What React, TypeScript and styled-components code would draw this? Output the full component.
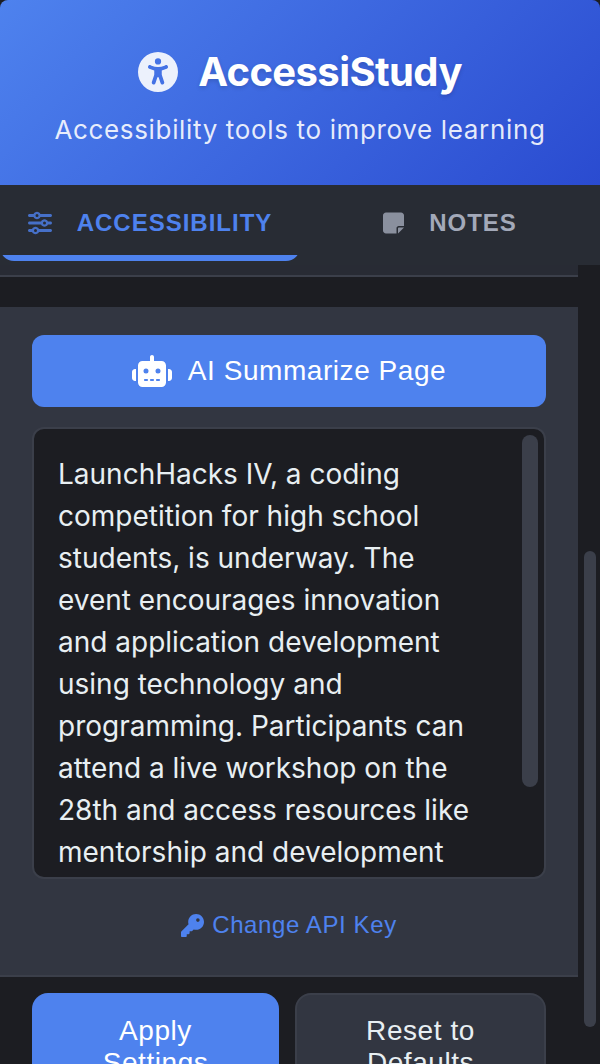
import React, { useState } from 'react';
import styled, { createGlobalStyle } from 'styled-components';
import { FaKey, FaNoteSticky, FaRobot, FaSliders, FaUniversalAccess } from 'react-icons/fa6';

const GlobalStyle = createGlobalStyle`
  *, *::before, *::after { box-sizing: border-box; }
  body {
    margin: 0;
    background: #1c1d22;
    color: #e8eff2;
    font-family: Inter, sans-serif;
    overflow: hidden;
  }
  button { font-family: "Liberation Sans", Arial, sans-serif; }
`;

const Popup = styled.div`
  display: flex;
  flex-direction: column;
  height: 100vh;
  overflow: hidden;
`;

const Header = styled.header`
  flex: none;
  display: flex;
  flex-direction: column;
  align-items: center;
  gap: 16px;
  padding: 48px 32px 38px;
  border-radius: 8px 8px 0 0;
  background: linear-gradient(135deg, #4e82ee 0%, #2a4bd0 100%);
`;

const Brand = styled.h1`
  display: flex;
  align-items: center;
  gap: 20px;
  margin: 0;
  font-size: 40px;
  line-height: 48px;
  font-weight: 700;
  letter-spacing: -0.015em;
  color: #fff;
  text-shadow: 0 2px 4px rgba(0, 0, 0, 0.15);

  svg { opacity: 0.9; }
`;

const Tagline = styled.p`
  margin: 0;
  font-size: 26px;
  line-height: 35px;
  letter-spacing: 0.025em;
  color: rgba(255, 255, 255, 0.88);
`;

const TabBar = styled.nav`
  flex: none;
  display: flex;
  height: 80px;
  background: #282c34;
`;

const Tab = styled.button<{ $active: boolean; $iconWidth: number }>`
  position: relative;
  flex: 1;
  display: flex;
  align-items: center;
  justify-content: center;
  gap: 25px;
  height: 76px;
  padding: 0;
  border: 0;
  border-radius: 14px;
  overflow: hidden;
  background: none;
  color: ${(p) => (p.$active ? '#4e82ee' : '#a3a9b9')};
  font-size: 24px;
  font-weight: 700;
  letter-spacing: 1px;
  text-transform: uppercase;
  cursor: pointer;

  svg {
    flex: none;
    width: ${(p) => p.$iconWidth}px;
    height: 24px;
    opacity: 0.8;
  }

  &::after {
    content: '';
    position: absolute;
    inset: auto 0 0;
    height: 6px;
    background: ${(p) => (p.$active ? '#4e82ee' : 'transparent')};
  }
`;

const Viewport = styled.div`
  flex: 1;
  min-height: 0;
  display: flex;
`;

const Content = styled.main`
  flex: 1;
  min-width: 0;
  overflow: hidden;
`;

const PageScrollbar = styled.div`
  flex: none;
  width: 22px;
  padding: 286px 4px 0 6px;
`;

const Thumb = styled.div<{ $size: number }>`
  height: ${(p) => p.$size}px;
  border-radius: 8px;
  background: #3b3f4a;
`;

const PreviousSection = styled.div`
  height: 12px;
  margin-bottom: 30px;
  border-bottom: 2px solid #3b3f4a;
  background: #282b34;
`;

const Section = styled.section`
  display: flex;
  flex-direction: column;
  padding: 28px 32px 36px;
  border-bottom: 2px solid #3b3f4a;
  background: #323641;
`;

const SummarizeButton = styled.button`
  display: flex;
  align-items: center;
  justify-content: center;
  gap: 16px;
  height: 72px;
  border: 0;
  border-radius: 12px;
  background: #4e82ee;
  color: #fff;
  font-size: 28px;
  letter-spacing: 0.02em;
  cursor: pointer;
`;

const SummaryBox = styled.div`
  display: flex;
  height: 452px;
  margin-top: 20px;
  border: 2px solid #3b3f4a;
  border-radius: 12px;
  background: #1c1d22;
  overflow: hidden;
`;

const SummaryText = styled.p`
  flex: 1;
  margin: 0;
  padding: 24px 40px 0 24px;
  font-size: 28px;
  line-height: 42px;
`;

const SummaryScrollbar = styled.div`
  flex: none;
  width: 22px;
  padding: 6px 6px 0 0;
`;

const KeyButton = styled.button`
  display: flex;
  align-items: center;
  align-self: center;
  gap: 8px;
  margin-top: 32px;
  padding: 0;
  border: 0;
  background: none;
  color: #4e82ee;
  font-size: 24px;
  line-height: 28px;
  letter-spacing: 0.025em;
  cursor: pointer;
`;

const Actions = styled.div`
  display: flex;
  gap: 16px;
  padding: 16px 32px;
`;

const ActionButton = styled.button<{ $primary?: boolean }>`
  flex: 1 1 0;
  min-width: 0;
  height: 108px;
  padding: 0 48px;
  border: ${(p) => (p.$primary ? '0' : '2px solid #3b3f4a')};
  border-radius: 16px;
  background: ${(p) => (p.$primary ? '#4e82ee' : '#323641')};
  color: ${(p) => (p.$primary ? '#fff' : '#e8eff2')};
  font-size: 28px;
  line-height: 32px;
  letter-spacing: 0.02em;
  cursor: pointer;
`;

const SUMMARY =
  'LaunchHacks IV, a coding competition for high school students, is underway. The event encourages innovation and application development using technology and programming. Participants can attend a live workshop on the 28th and access resources like mentorship and development';

type TabName = 'accessibility' | 'notes';

export default function App() {
  const [tab, setTab] = useState<TabName>('accessibility');

  return (
    <Popup>
      <GlobalStyle />
      <Header>
        <Brand>
          <FaUniversalAccess size={40} aria-hidden />
          AccessiStudy
        </Brand>
        <Tagline>Accessibility tools to improve learning</Tagline>
      </Header>
      <TabBar>
        <Tab
          $active={tab === 'accessibility'}
          $iconWidth={24}
          onClick={() => setTab('accessibility')}
        >
          <FaSliders aria-hidden />
          Accessibility
        </Tab>
        <Tab $active={tab === 'notes'} $iconWidth={21} onClick={() => setTab('notes')}>
          <FaNoteSticky aria-hidden />
          Notes
        </Tab>
      </TabBar>
      <Viewport>
        <Content>
          <PreviousSection />
          <Section>
            <SummarizeButton>
              <FaRobot size={40} aria-hidden />
              AI Summarize Page
            </SummarizeButton>
            <SummaryBox>
              <SummaryText>{SUMMARY}</SummaryText>
              <SummaryScrollbar>
                <Thumb $size={352} />
              </SummaryScrollbar>
            </SummaryBox>
            <KeyButton>
              <FaKey size={23} aria-hidden />
              Change API Key
            </KeyButton>
          </Section>
          <Actions>
            <ActionButton $primary>Apply Settings</ActionButton>
            <ActionButton>Reset to Defaults</ActionButton>
          </Actions>
        </Content>
        <PageScrollbar>
          <Thumb $size={476} />
        </PageScrollbar>
      </Viewport>
    </Popup>
  );
}
